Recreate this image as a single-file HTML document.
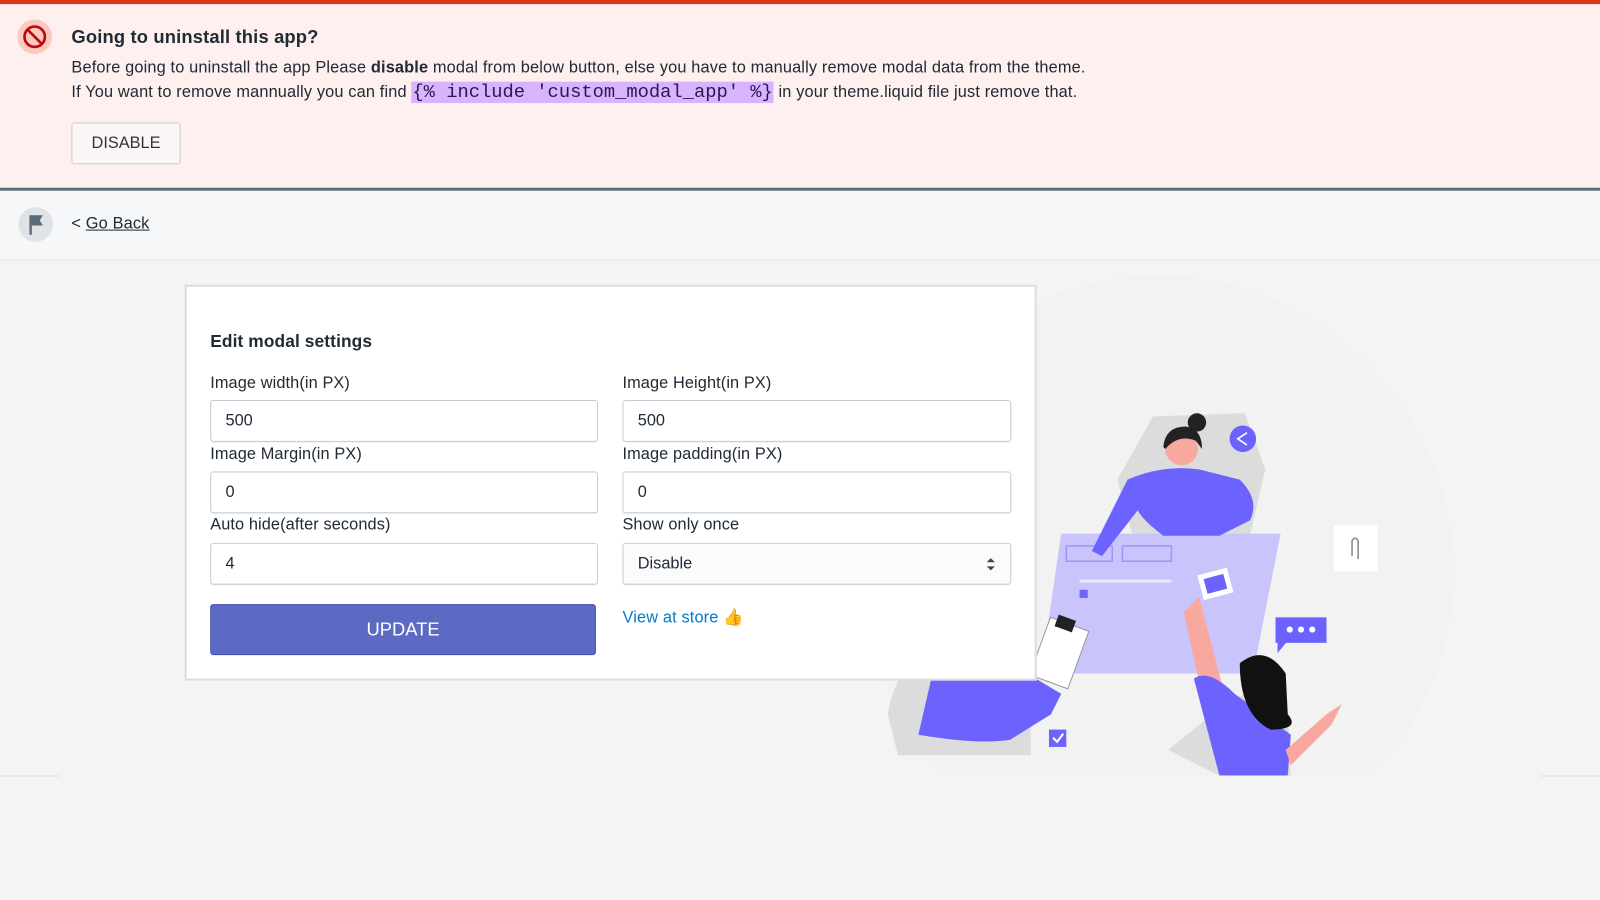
<!DOCTYPE html>
<html><head><meta charset="utf-8"><style>
html,body{margin:0;padding:0;width:1600px;height:900px;overflow:hidden;background:#f4f4f4;font-family:"Liberation Sans",Arial,sans-serif;color:#212b36}
#w{position:absolute;left:0;top:0;width:1568px;height:882px;transform:scale(1.0204);transform-origin:0 0}
.a{position:absolute}
.alert{left:0;top:0;width:1568px;height:185px;background:#fdf0ee;border-top:4px solid #de3618;box-sizing:border-box}
.dark{left:0;top:184px;width:1568px;height:3px;background:#5d6b78}
.bar{left:0;top:187px;width:1568px;height:67px;background:#f6f7f9;border-bottom:1px solid #e3e5e8}
.t{font-size:16px;white-space:nowrap;letter-spacing:0.15px}
code{font-family:"Liberation Mono",monospace;font-size:18.4px;background:#d8b3ff;color:#2a1a4a;padding:0 1px;letter-spacing:0}
.btn{left:70px;top:120px;width:107px;height:41px;border:1px solid #c4cdd5;border-radius:3px;background:#fbf7f6;box-sizing:border-box;text-align:center;line-height:39px;font-size:16px;color:#333}
.card{left:181px;top:279px;width:835px;height:388px;background:#fff;border:2px solid #dcdcdc;box-sizing:border-box}
.in{width:380px;height:41px;border:1px solid #c4cdd5;border-radius:3px;box-sizing:border-box;background:#fff;font-size:16px;line-height:39px;padding-left:14px;box-shadow:0 1px 0 rgba(0,0,0,.05)}
.lb{font-size:16px;color:#212b36;letter-spacing:0.1px}
</style></head><body><div id="w">
<div class="a alert"></div>
<div class="a dark"></div>
<svg class="a" style="left:17px;top:19px" width="34" height="34" viewBox="0 0 34 34"><circle cx="17" cy="17" r="17" fill="#fbc9bf"/><circle cx="17" cy="17" r="10" fill="none" stroke="#bf0711" stroke-width="2.6"/><line x1="10" y1="10" x2="24" y2="24" stroke="#bf0711" stroke-width="2.6"/></svg>
<div class="a t" style="left:70px;top:26px;font-size:18px;font-weight:bold">Going to uninstall this app?</div>
<div class="a t" style="left:70px;top:58px">Before going to uninstall the app Please <b>disable</b> modal from below button, else you have to manually remove modal data from the theme.</div>
<div class="a t" style="left:70px;top:80px">If You want to remove mannually you can find <code>{% include 'custom_modal_app' %}</code> in your theme.liquid file just remove that.</div>
<div class="a btn">DISABLE</div>
<div class="a bar"></div>
<svg class="a" style="left:18px;top:203px" width="34" height="34" viewBox="0 0 34 34"><circle cx="17" cy="17" r="17" fill="#dfe3e8"/><path d="M12 8 V27" stroke="#5d6b78" stroke-width="2.4"/><path d="M12 8 H24 L21 13 L24 18 H12Z" fill="#5d6b78"/></svg>
<div class="a t" style="left:70px;top:211px">&lt; <u>Go Back</u></div>
<div class="a" style="left:0;top:760px;width:58px;height:1px;background:#dcdcdc"></div>
<div class="a" style="left:1510px;top:760px;width:58px;height:1px;background:#dcdcdc"></div>
<svg class="a" style="left:0;top:0" width="1568" height="882" viewBox="0 0 1568 882">
<defs><clipPath id="c"><rect x="0" y="0" width="1568" height="760"/></clipPath></defs>
<g clip-path="url(#c)">
<circle cx="1135" cy="560" r="290" fill="#f2f2f2"/>
<polygon points="1130,408 1220,405 1240,460 1225,525 1110,525 1095,470" fill="#dcdcdc"/>
<path d="M870 700 Q880 640 930 640 L1010 650 L1010 740 L880 740Z" fill="#dcdcdc"/>
<polygon points="1145,735 1200,690 1260,660 1265,760 1195,760" fill="#dcdcdc"/>
<polygon points="1040,523 1255,523 1228,660 1020,660" fill="#c9c4fc"/>
<rect x="1045" y="535" width="45" height="15" fill="none" stroke="#9e96f5" stroke-width="1.5"/>
<rect x="1100" y="535" width="48" height="15" fill="none" stroke="#9e96f5" stroke-width="1.5"/>
<rect x="1058" y="568" width="90" height="3" fill="#e7e4ff"/><rect x="1058" y="578" width="8" height="8" fill="#6c63ff"/>
<path d="M1105 470 Q1140 455 1175 460 L1215 470 Q1235 490 1225 510 L1195 525 L1140 525 Q1120 510 1115 500 L1080 545 L1070 540Z" fill="#6c63ff"/>
<circle cx="1158" cy="440" r="16" fill="#f9a8a0"/>
<path d="M1140 438 Q1142 418 1162 418 Q1178 420 1178 440 L1172 432 Q1155 425 1142 440Z" fill="#222"/>
<circle cx="1173" cy="414" r="9" fill="#222"/>
<circle cx="1218" cy="430" r="13" fill="#6c63ff"/>
<path d="M1222 424 L1213 430 L1222 436" stroke="#fff" stroke-width="1.6" fill="none"/>
<rect x="1307" y="515" width="43" height="45" fill="#fff"/>
<path d="M1325 545 V530 Q1328 525 1331 530 V548" stroke="#888" stroke-width="1.5" fill="none"/>
<rect x="1250" y="605" width="50" height="25" fill="#6c63ff"/><polygon points="1252,628 1262,628 1252,640" fill="#6c63ff"/>
<circle cx="1264" cy="617" r="3" fill="#fff"/><circle cx="1275" cy="617" r="3" fill="#fff"/><circle cx="1286" cy="617" r="3" fill="#fff"/>
<rect x="1176" y="560" width="30" height="25" fill="#fff" transform="rotate(-15 1190 572)"/><rect x="1181" y="565" width="20" height="15" fill="#6c63ff" transform="rotate(-15 1190 572)"/>
<path d="M1160 600 L1175 585 L1200 680 L1180 690Z" fill="#f9a8a0"/>
<path d="M1170 665 Q1185 655 1210 680 L1265 720 L1262 760 L1195 760Z" fill="#6c63ff"/>
<path d="M1215 650 Q1240 630 1260 660 L1262 700 Q1275 715 1245 715 Q1215 700 1215 650Z" fill="#111"/>
<path d="M1260 735 L1300 700 L1315 690 L1305 710 L1265 750Z" fill="#f9a8a0"/>
<rect x="1018" y="610" width="40" height="60" fill="#fff" stroke="#999" transform="rotate(20 1038 640)"/>
<rect x="1035" y="605" width="18" height="12" fill="#222" transform="rotate(20 1044 611)"/>
<path d="M915 655 L990 650 L1040 680 L1030 700 L990 725 Q960 730 900 720Z" fill="#6c63ff"/>
<rect x="1028" y="715" width="17" height="17" fill="#6c63ff"/><path d="M1032 723 L1036 727 L1042 719" stroke="#fff" stroke-width="2" fill="none"/>
</g>
</svg>
<div class="a card"></div>
<div class="a" style="left:206px;top:325px;font-size:17px;font-weight:bold;letter-spacing:0.1px">Edit modal settings</div>
<div class="a lb" style="left:206px;top:367px">Image width(in PX)</div>
<div class="a lb" style="left:610px;top:367px">Image Height(in PX)</div>
<div class="a in" style="left:206px;top:392px">500</div>
<div class="a in" style="left:610px;top:392px;width:381px">500</div>
<div class="a lb" style="left:206px;top:437px">Image Margin(in PX)</div>
<div class="a lb" style="left:610px;top:437px">Image padding(in PX)</div>
<div class="a in" style="left:206px;top:462px">0</div>
<div class="a in" style="left:610px;top:462px;width:381px">0</div>
<div class="a lb" style="left:206px;top:506px">Auto hide(after seconds)</div>
<div class="a lb" style="left:610px;top:506px">Show only once</div>
<div class="a in" style="left:206px;top:532px">4</div>
<div class="a in" style="left:610px;top:532px;width:381px;background:#fbfbfc">Disable<svg style="position:absolute;right:14px;top:13px" width="10" height="14" viewBox="0 0 10 14"><path d="M5 1 L9 5 H1Z M5 13 L9 9 H1Z" fill="#444"/></svg></div>
<div class="a" style="left:206px;top:592px;width:378px;height:50px;background:#5c6ac4;border:1px solid #3f4eae;border-radius:3px;box-sizing:border-box;color:#fff;text-align:center;line-height:48px;font-size:18px">UPDATE</div>
<div class="a t" style="left:610px;top:595px;color:#007ace">View at store <span style="color:#f5a623">&#128077;</span></div>
</div></body></html>
